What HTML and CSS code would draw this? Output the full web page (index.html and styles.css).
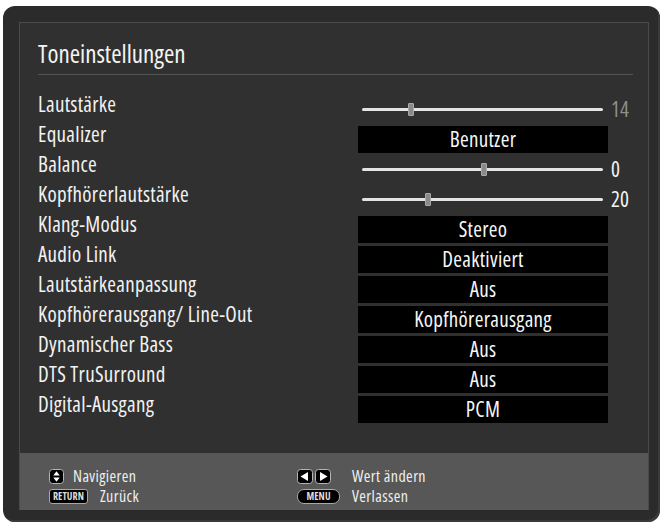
FILE: index.html
```html
<!DOCTYPE html>
<html lang="de">
<head>
<meta charset="utf-8">
<title>Toneinstellungen</title>
<link rel="stylesheet" href="styles.css">
</head>
<body>
<div class="screen">
  <div class="frame">
    <div class="content">
      <h1 class="title">Toneinstellungen</h1>
      <div class="rows">
        <div class="row">
          <span class="label">Lautstärke</span>
          <div class="slider"><div class="track"><span class="knob" style="left:46px"></span></div></div>
          <span class="num dim">14</span>
        </div>
        <div class="row">
          <span class="label">Equalizer</span>
          <div class="box">Benutzer</div>
        </div>
        <div class="row">
          <span class="label">Balance</span>
          <div class="slider"><div class="track"><span class="knob" style="left:119px"></span></div></div>
          <span class="num">0</span>
        </div>
        <div class="row">
          <span class="label">Kopfhörerlautstärke</span>
          <div class="slider"><div class="track"><span class="knob" style="left:63px"></span></div></div>
          <span class="num">20</span>
        </div>
        <div class="row">
          <span class="label">Klang-Modus</span>
          <div class="box">Stereo</div>
        </div>
        <div class="row">
          <span class="label">Audio Link</span>
          <div class="box">Deaktiviert</div>
        </div>
        <div class="row">
          <span class="label">Lautstärkeanpassung</span>
          <div class="box">Aus</div>
        </div>
        <div class="row">
          <span class="label">Kopfhörerausgang/ Line-Out</span>
          <div class="box">Kopfhörerausgang</div>
        </div>
        <div class="row">
          <span class="label">Dynamischer Bass</span>
          <div class="box">Aus</div>
        </div>
        <div class="row">
          <span class="label">DTS TruSurround</span>
          <div class="box">Aus</div>
        </div>
        <div class="row">
          <span class="label">Digital-Ausgang</span>
          <div class="box">PCM</div>
        </div>
      </div>
    </div>
    <div class="footer">
      <div class="hint">
        <svg class="ico-ud" width="15" height="15" viewBox="0 0 15 15"><rect x="0.5" y="0.5" width="14" height="14" rx="3" fill="#000" stroke="#b5b5b5" stroke-width="1"/><polygon points="7.5,2.3 4.3,6.4 10.7,6.4" fill="#fff"/><polygon points="4.3,8.6 10.7,8.6 7.5,12.7" fill="#fff"/></svg>
        <span class="htext">Navigieren</span>
      </div>
      <div class="hint">
        <span class="arrows">
          <svg width="16" height="15" viewBox="0 0 16 15"><rect x="0.5" y="0.5" width="15" height="14" rx="3" fill="#000" stroke="#b5b5b5" stroke-width="1"/><polygon points="3.5,7.5 11,3 11,12" fill="#fff"/></svg>
          <svg width="16" height="15" viewBox="0 0 16 15"><rect x="0.5" y="0.5" width="15" height="14" rx="3" fill="#000" stroke="#b5b5b5" stroke-width="1"/><polygon points="12.5,7.5 5,3 5,12" fill="#fff"/></svg>
        </span>
        <span class="htext">Wert ändern</span>
      </div>
      <div class="hint">
        <span class="badge ret">RETURN</span>
        <span class="htext">Zurück</span>
      </div>
      <div class="hint">
        <span class="badge menu">MENU</span>
        <span class="htext">Verlassen</span>
      </div>
    </div>
  </div>
</div>
</body>
</html>
```
FILE: styles.css
```css
html, body {
  margin: 0;
  padding: 0;
  background: #ffffff;
}

body {
  font-family: "Open Sans", "DejaVu Sans Condensed", sans-serif;
  font-stretch: 75%;
  color: #f2f2f2;
}

.screen {
  margin: 6px 0 0 3px;
  width: 657px;
  height: 516px;
  box-sizing: border-box;
  padding: 16px 11px 12px 16px;
  background: #2b2b2b;
  border-radius: 12px;
  box-shadow: inset -2px -2px 0 #3a3a3a;
}

.frame {
  height: 100%;
  box-sizing: border-box;
  border: 1px solid #4b4b4b;
  border-bottom: 0;
  background: #303030;
  display: flex;
  flex-direction: column;
}

.content {
  padding: 0 15px 0 18px;
}

.title {
  margin: 0;
  padding: 15px 0 5px 0;
  font-size: 25px;
  line-height: 31px;
  font-weight: normal;
  color: #f4f4f4;
  border-bottom: 1px solid #545454;
}

.rows {
  margin-top: 21px;
  display: flex;
  flex-direction: column;
  gap: 3px;
}

.row {
  display: grid;
  grid-template-columns: 320px 250px 1fr;
  height: 27px;
}

.label {
  align-self: start;
  font-size: 21px;
  line-height: 16px;
  letter-spacing: 0.3px;
  white-space: nowrap;
  color: #f2f2f2;
}

.box {
  background: #000;
  color: #f6f6f6;
  text-align: center;
  font-size: 21px;
  line-height: 27px;
  letter-spacing: 0.3px;
}

.slider {
  display: flex;
  align-items: center;
  padding: 0 5px 0 4px;
}

.track {
  position: relative;
  flex: 1;
  height: 3px;
  background: #e4e4e4;
  border-radius: 2px;
}

.knob {
  position: absolute;
  top: -5px;
  width: 6px;
  height: 13px;
  box-sizing: border-box;
  background: #8a8a8a;
  border: 1px solid #a9a9a9;
  border-radius: 1px;
}

.num {
  padding-left: 3px;
  font-size: 21px;
  line-height: 27px;
  color: #f4f4f4;
}

.num.dim {
  color: #8e8e8e;
}

.footer {
  margin-top: auto;
  height: 57px;
  box-sizing: border-box;
  background: #575757;
  padding: 13px 0 0 29px;
  display: grid;
  grid-template-columns: 248px 1fr;
  grid-auto-rows: 20px;
}

.hint {
  display: flex;
  align-items: center;
}

.htext {
  font-size: 16px;
  line-height: 20px;
  letter-spacing: 0.4px;
  color: #eeeeee;
  white-space: nowrap;
}

.ico-ud {
  display: block;
  margin-right: 9px;
}

.arrows {
  display: flex;
  gap: 2px;
  margin-right: 21px;
}

.arrows svg {
  display: block;
}

.badge {
  display: inline-flex;
  align-items: center;
  justify-content: center;
  height: 15px;
  box-sizing: border-box;
  background: #000;
  border: 1px solid #a8a8a8;
  color: #dcdcdc;
  font-size: 10px;
  line-height: 10px;
  font-weight: 700;
  letter-spacing: 0.1px;
  margin-right: 12px;
}

.badge.ret {
  width: 39px;
  border-radius: 3px;
}

.badge.menu {
  width: 43px;
  border-radius: 7px;
}
```
